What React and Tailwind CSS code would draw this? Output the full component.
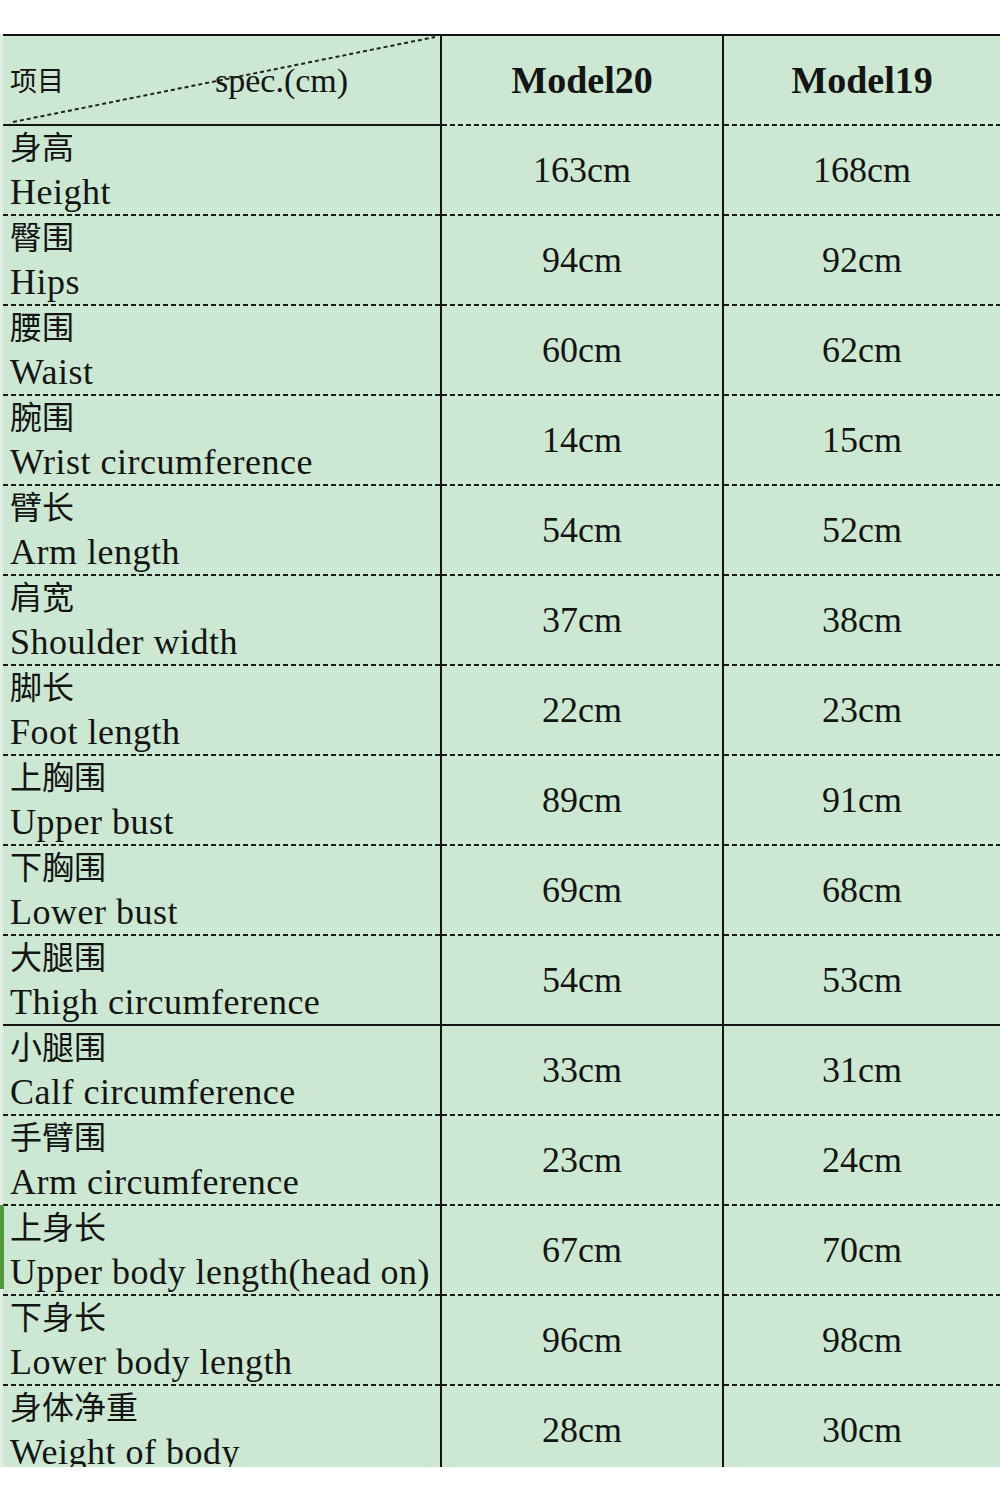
import React from "react";

const rows = [
  ["身高", "Height", "163cm", "168cm"],
  ["臀围", "Hips", "94cm", "92cm"],
  ["腰围", "Waist", "60cm", "62cm"],
  ["腕围", "Wrist circumference", "14cm", "15cm"],
  ["臂长", "Arm length", "54cm", "52cm"],
  ["肩宽", "Shoulder width", "37cm", "38cm"],
  ["脚长", "Foot length", "22cm", "23cm"],
  ["上胸围", "Upper bust", "89cm", "91cm"],
  ["下胸围", "Lower bust", "69cm", "68cm"],
  ["大腿围", "Thigh circumference", "54cm", "53cm"],
  ["小腿围", "Calf circumference", "33cm", "31cm"],
  ["手臂围", "Arm circumference", "23cm", "24cm"],
  ["上身长", "Upper body length(head on)", "67cm", "70cm"],
  ["下身长", "Lower body length", "96cm", "98cm"],
  ["身体净重", "Weight of body", "28cm", "30cm"],
];

const dashed =
  "bg-[image:repeating-linear-gradient(90deg,#1a1a1a_0_5px,transparent_5px_8px)]";
const solid = "bg-[#141414]";

function Sep({ first = "dashed", rest = "dashed" }) {
  return (
    <div className="grid grid-cols-[437px_282px_278px] h-[2px]">
      <div className={first === "solid" ? solid : dashed} />
      <div className={`border-l-2 border-[#141414] ${rest === "solid" ? solid : dashed}`} />
      <div className={`border-l-2 border-[#141414] ${rest === "solid" ? solid : dashed}`} />
    </div>
  );
}

function Row({ zh, en, a, b, mark }) {
  return (
    <div className="grid grid-cols-[437px_282px_278px] h-[88px]">
      <div className="relative flex flex-col pl-[7px]">
        {mark && (
          <div className="absolute left-[-3px] top-[-1px] w-[4px] h-[84px] bg-[#4f9a3c]" />
        )}
        <div className="h-[44px] leading-[44px] text-[32px] whitespace-nowrap">{zh}</div>
        <div className="h-[44px] leading-[44px] text-[36px] tracking-[0.5px] whitespace-nowrap">
          {en}
        </div>
      </div>
      <div className="border-l-2 border-[#141414] flex items-center justify-center text-[36px]">
        {a}
      </div>
      <div className="border-l-2 border-[#141414] flex items-center justify-center text-[36px]">
        {b}
      </div>
    </div>
  );
}

export default function App() {
  return (
    <div
      className="w-[1000px] h-[1500px] bg-white text-[#141414] overflow-hidden"
      style={{ fontFamily: "'Liberation Serif', 'Noto Sans CJK SC', serif" }}
    >
      <div className="mt-[34px] w-[1000px] h-[1433px] overflow-hidden pl-[3px] bg-[#e2eee3]">
        <div className="w-[997px] h-[1433px] bg-[#cce8d2]">
          <div className="h-[2px] bg-[#141414]" />
          <div className="grid grid-cols-[437px_282px_278px] h-[88px]">
            <div className="relative flex items-center pl-[7px]">
              <span className="text-[27px]" style={{ fontFamily: "'Noto Sans CJK SC', sans-serif" }}>
                项目
              </span>
              <span className="ml-[151px] text-[34px]">spec.(cm)</span>
              <svg
                className="absolute inset-0 pointer-events-none"
                width="437"
                height="88"
                viewBox="0 0 437 88"
              >
                <line
                  x1="10"
                  y1="86"
                  x2="432"
                  y2="1"
                  stroke="#222"
                  strokeWidth="2"
                  strokeDasharray="4 3"
                />
              </svg>
            </div>
            <div className="border-l-2 border-[#141414] flex items-center justify-center text-[38px] font-bold">
              Model20
            </div>
            <div className="border-l-2 border-[#141414] flex items-center justify-center text-[38px] font-bold">
              Model19
            </div>
          </div>
          <Sep first="solid" />
          {rows.map((r, i) => (
            <React.Fragment key={i}>
              <Row zh={r[0]} en={r[1]} a={r[2]} b={r[3]} mark={i === 12} />
              {i < rows.length - 1 && (
                <Sep
                  first={i === 9 ? "solid" : "dashed"}
                  rest={i === 9 ? "solid" : "dashed"}
                />
              )}
            </React.Fragment>
          ))}
        </div>
      </div>
    </div>
  );
}
